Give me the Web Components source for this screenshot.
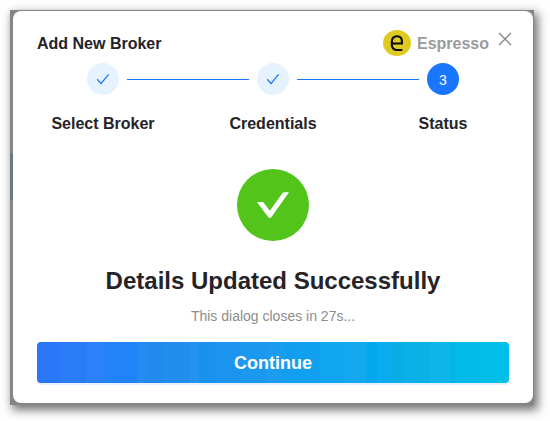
<!DOCTYPE html>
<html lang="en"><head><meta charset="utf-8"><title>Add New Broker</title>
<style>
body{margin:0;background:#fefefe;font-family:"Liberation Sans",Arial,sans-serif;color:#252328}
</style></head><body>
<broker-dialog>
  <span slot="title">Add New Broker</span>
  <broker-brand slot="brand">Espresso</broker-brand>
  <step-bar slot="steps">
    <step-item state="done">Select Broker</step-item>
    <step-item state="done">Credentials</step-item>
    <step-item state="active" number="3" last>Status</step-item>
  </step-bar>
  <result-panel><span slot="heading">Details Updated Successfully</span><span slot="note">This dialog closes in 27s...</span></result-panel>
  <primary-button slot="action">Continue</primary-button>
</broker-dialog>
<script>
const define=(name,html)=>customElements.define(name,class extends HTMLElement{
  constructor(){super();const t=document.createElement('template');t.innerHTML=html;
    this.attachShadow({mode:'open'}).append(t.content.cloneNode(true));}
  connectedCallback(){const n=this.shadowRoot.querySelector('.number');if(n)n.textContent=this.getAttribute('number')||'';}
});
define('broker-dialog',`<style>
:host{display:block;box-sizing:border-box;height:421px;padding:10px 16px 16px 10px}
.frame{box-sizing:border-box;height:395px;padding:1px 1px 2px 3px;background:linear-gradient(90deg,#6d7886,#6d7886) 0 143px/3px 47px no-repeat,#858487;box-shadow:3px 4px 9px 1px rgba(0,0,0,.54)}
.card{box-sizing:border-box;height:392px;background:#fff;border-radius:8px;padding:16px 24px 20px;display:flex;flex-direction:column}
header{display:flex;align-items:center;height:32px}
.title{font-size:16px;font-weight:700;line-height:32px;padding-top:2px;flex:1}
.close{width:14px;height:14px;margin:-9px -3px 0 9px;display:block}
</style><div class="frame"><section class="card"><header><div class="title"><slot name="title"></slot></div><slot name="brand"></slot>
<svg class="close" viewBox="0 0 14 14"><path d="M1.1 1.1 12.9 12.9M12.9 1.1 1.1 12.9" stroke="#8a8a8a" stroke-width="1.4" fill="none"/></svg></header>
<slot name="steps"></slot><slot></slot><slot name="action"></slot></section></div>`);
define('broker-brand',`<style>
:host{display:flex;align-items:center;gap:6px;font-size:16px;font-weight:700;color:#9b9b9b;line-height:32px}
svg{display:block;width:28px;height:26px;margin-top:-1px}
.name{padding-top:2px}
</style><svg viewBox="0 0 28 26"><ellipse cx="14" cy="13" rx="14" ry="13" fill="#dfca22"/><path d="M9 13.5H18.9V11.2Q18.9 6.2 14.1 6.2 8.8 6.2 8.8 12V14.5Q8.8 20 14.3 20H19.4" fill="none" stroke="#090b03" stroke-width="2.1"/></svg><span class="name"><slot></slot></span>`);
define('step-bar',`<style>:host{display:flex;flex:none;height:71px;margin-top:4px}</style><slot></slot>`);
define('step-item',`<style>
:host{display:block;width:170px;flex:none}
:host([last]){width:132px}
.rail{display:flex;align-items:center;gap:8px;padding-left:50px;height:32px}
.dot{width:32px;height:32px;border-radius:50%;background:#e6f3ff;color:#1976ff;display:flex;align-items:center;justify-content:center;font-size:14px;line-height:34px;flex:none}
.line{height:1px;width:122px;flex:none;background:#1976ff}
svg{width:14px;height:14px;display:block}
.number{display:none}
:host([state=active]) .dot{background:#1976ff;color:#fff}
:host([state=active]) svg,:host([last]) .line{display:none}
:host([state=active]) .number{display:block;padding-top:1px}
.label{width:132px;text-align:center;font-size:16px;font-weight:700;line-height:24px;margin-top:17px;white-space:nowrap}
</style><div class="rail"><div class="dot"><svg viewBox="0 0 14 14"><path d="M1.2 7.3 5.1 11.5 12.6 2.4" fill="none" stroke="currentColor" stroke-width="1.25"/></svg><span class="number"></span></div><div class="line"></div></div><div class="label"><slot></slot></div>`);
define('result-panel',`<style>
:host{display:flex;flex:none;flex-direction:column;align-items:center;padding-top:35px;height:208px;box-sizing:border-box}
svg{display:block;flex:none;width:72px;height:72px}
.heading{font-size:24px;font-weight:700;line-height:32px;margin-top:24px;white-space:nowrap}
.note{font-size:14px;line-height:22px;margin-top:8px;color:#8c8c8c}
</style><svg viewBox="0 0 72 72"><circle cx="36" cy="36" r="36" fill="#52c41a"/><path d="M20 33H25Q26.2 33 27 34L32.8 41.8 45.2 24.4Q46 23.3 47.3 23.3H52L34.5 48Q32.8 49.8 31.1 48Z" fill="#fff"/></svg>
<div class="heading"><slot name="heading"></slot></div><div class="note"><slot name="note"></slot></div>`);
define('primary-button',`<style>
:host{display:block;flex:none;height:41px}
button{display:block;width:100%;height:41px;padding:1px 0 0;border:0;border-radius:4px;font:700 18px/40px "Liberation Sans",Arial,sans-serif;color:#fff;box-shadow:0 2px 0 #e6f1ff;
background:linear-gradient(90deg,#2976f6 0 23px,#2a7df7 23px 49px,#2b82f8 49px 68px,#2084f8 68px 100px,#238af8 100px 109px,#238aed 109px 126px,#218eee 126px 152px,#2592ef 152px 162px,#1991ef 162px 178px,#1a94ef 178px 204px,#1a99ef 204px 230px,#1c9cef 230px 245px,#129dee 245px 256px,#10a0ef 256px 282px,#12a5ef 282px 308px,#14a8ee 308px 329px,#05a8ef 329px 340px,#08adf1 340px 353px,#0aace8 353px 366px,#0ab1e6 366px 392px,#0db5e9 392px 413px,#03b4e6 413px 418px,#02bae9 418px 444px,#02bfea 444px)}
</style><button><slot></slot></button>`);
</script></body></html>
